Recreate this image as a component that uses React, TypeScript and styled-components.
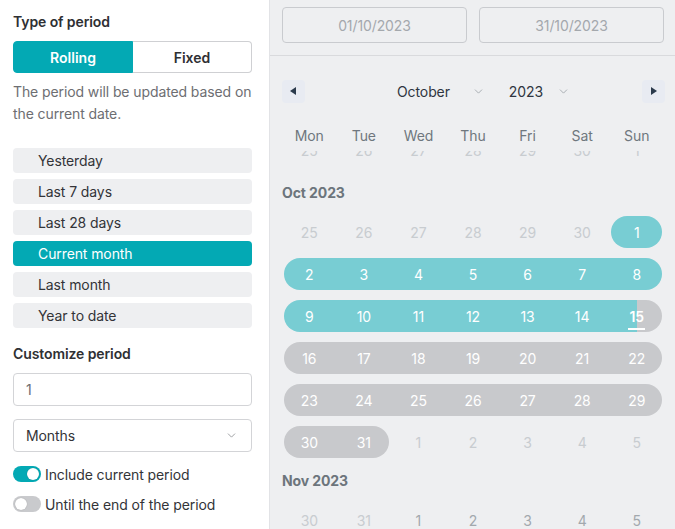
import React from "react"
import styled, { createGlobalStyle } from "styled-components"
import { ChevronDown } from "lucide-react"

const TEAL = "#03a9b4"
const TEAL_LIGHT = "#78cdd3"
const GRAY_PILL = "#c8c9cc"

const GlobalStyle = createGlobalStyle`
  html, body { margin: 0; padding: 0; }
  body { font-family: Inter, "Noto Sans", sans-serif; background: #fff; color: #333; letter-spacing: -0.1px; }
  * { box-sizing: border-box; }
`

const Layout = styled.div`
  display: flex;
  width: 675px;
  height: 529px;
  overflow: hidden;
`

/* ---------- left side ---------- */

const Sidebar = styled.aside`
  width: 270px;
  flex-shrink: 0;
  border-right: 1px solid #e2e3e6;
  padding: 12px 17px 0 13px;
  display: flex;
  flex-direction: column;
  & > * { flex-shrink: 0; }
`

const Heading = styled.div<{ $top?: number }>`
  font-size: 14px;
  line-height: 20px;
  font-weight: 600;
  color: #2f3033;
  margin-top: ${(p) => p.$top || 0}px;
`

const Segment = styled.div`
  display: flex;
  height: 32px;
  margin-top: 9px;
`

const SegmentButton = styled.button<{ $active?: boolean }>`
  flex: 1;
  font-family: inherit;
  font-size: 14px;
  font-weight: 600;
  border: 1px solid ${(p) => (p.$active ? TEAL : "#cfd0d3")};
  background: ${(p) => (p.$active ? TEAL : "#fff")};
  color: ${(p) => (p.$active ? "#fff" : "#2f3033")};
  padding: 0;
  &:first-child { border-radius: 4px 0 0 4px; }
  &:last-child { border-radius: 0 4px 4px 0; border-left: none; }
`

const Hint = styled.p`
  margin: 8px 0 0;
  font-size: 14px;
  line-height: 22px;
  color: #6d6e72;
`

const Presets = styled.div`
  display: flex;
  flex-direction: column;
  gap: 6px;
  margin-top: 23px;
`

const Preset = styled.div<{ $active?: boolean }>`
  height: 25px;
  display: flex;
  align-items: center;
  padding-left: 25px;
  border-radius: 4px;
  font-size: 14px;
  background: ${(p) => (p.$active ? TEAL : "#eeeff1")};
  color: ${(p) => (p.$active ? "#fff" : "#333438")};
`

const Field = styled.div<{ $top: number }>`
  height: 33px;
  margin-top: ${(p) => p.$top}px;
  border: 1px solid #d3d4d7;
  border-radius: 4px;
  display: flex;
  align-items: center;
  justify-content: space-between;
  padding: 0 13px 0 12px;
  font-size: 14px;
  color: #333438;
`

const FieldValue = styled.span<{ $muted?: boolean }>`
  color: ${(p) => (p.$muted ? "#6d6e72" : "#333438")};
`

const ToggleRow = styled.label<{ $top: number }>`
  display: flex;
  align-items: center;
  gap: 4px;
  height: 20px;
  margin-top: ${(p) => p.$top}px;
  font-size: 14px;
  color: #333438;
`

const Track = styled.span<{ $on?: boolean }>`
  width: 28px;
  height: 16px;
  border-radius: 8px;
  background: ${(p) => (p.$on ? TEAL : "#c9cacd")};
  display: flex;
  align-items: center;
  justify-content: ${(p) => (p.$on ? "flex-end" : "flex-start")};
  padding: 0 2px;
`

const Knob = styled.span`
  width: 12px;
  height: 12px;
  border-radius: 50%;
  background: #fff;
  box-shadow: 0 0 1px rgba(0, 0, 0, 0.3);
`

/* ---------- right side ---------- */

const CalendarPane = styled.section`
  flex: 1;
  background: #eeeff1;
  display: flex;
  flex-direction: column;
  overflow: hidden;
  & > * { flex-shrink: 0; }
`

const DateBar = styled.div`
  display: flex;
  gap: 12px;
  padding: 7px 11px 12px 12px;
  border-bottom: 1px solid #d9dadd;
`

const DateInput = styled.div`
  flex: 1;
  height: 36px;
  border: 1px solid #c9cbcf;
  border-radius: 4px;
  display: flex;
  align-items: center;
  justify-content: center;
  font-size: 14px;
  color: #a4a8ad;
`

const Nav = styled.div`
  display: flex;
  align-items: center;
  justify-content: space-between;
  height: 24px;
  margin-top: 23px;
  padding: 0 10px 0 12px;
`

const ArrowButton = styled.div`
  width: 23px;
  height: 23px;
  border-radius: 4px;
  background: #e8ebf2;
  display: flex;
  align-items: center;
  justify-content: center;
`

const NavCenter = styled.div`
  display: flex;
  align-items: center;
  gap: 24px;
  margin-left: 20px;
`

const Dropdown = styled.div<{ $gap: number }>`
  display: flex;
  align-items: center;
  gap: ${(p) => p.$gap}px;
  font-size: 14px;
  color: #2f3540;
`

const Weekdays = styled.div`
  display: grid;
  grid-template-columns: repeat(7, 1fr);
  margin-top: 23px;
  padding: 0 11px 0 12px;
  font-size: 14px;
  line-height: 20px;
  color: #6f777e;
  text-align: center;
`

const ClippedWeek = styled.div`
  height: 9px;
  overflow: hidden;
  margin-top: 5px;
`

const MonthLabel = styled.div<{ $top: number }>`
  margin-top: ${(p) => p.$top}px;
  padding-left: 12px;
  font-size: 14px;
  line-height: 20px;
  font-weight: 700;
  color: #6c757c;
`

const Weeks = styled.div<{ $top: number }>`
  display: flex;
  flex-direction: column;
  gap: 10px;
  margin-top: ${(p) => p.$top}px;
`

const Week = styled.div<{ $shift?: number }>`
  display: grid;
  grid-template-columns: repeat(7, 1fr);
  grid-template-rows: 32px;
  padding: 0 11px 0 12px;
  margin-top: ${(p) => p.$shift || 0}px;
`

const Pill = styled.div<{ $from: number; $to: number; $bg: string }>`
  grid-row: 1;
  grid-column: ${(p) => p.$from} / ${(p) => p.$to + 1};
  margin: 0 2px;
  border-radius: 16px;
  background: ${(p) => p.$bg};
`

const Day = styled.div<{ $col: number; $tone: "on" | "faint" | "dim" }>`
  grid-row: 1;
  grid-column: ${(p) => p.$col};
  display: flex;
  align-items: center;
  justify-content: center;
  font-size: 14px;
  z-index: 1;
  color: ${(p) => (p.$tone === "on" ? "#fff" : p.$tone === "faint" ? "#c8ccd0" : "#a2a8ad")};
`

const Today = styled.span`
  position: relative;
  font-weight: 600;
  &::after {
    content: "";
    position: absolute;
    left: -1px;
    right: -1px;
    bottom: -5px;
    height: 2px;
    background: #fff;
  }
`

type Tone = "on" | "faint" | "dim"

const Triangle = ({ dir }: { dir: "left" | "right" }) => (
  <svg width="7" height="8" viewBox="0 0 7 8">
    <polygon points={dir === "left" ? "6,0 6,8 0,4" : "1,0 1,8 7,4"} fill="#2b3a4c" />
  </svg>
)

const WeekRow = ({
  days,
  tones,
  pills = [],
  today,
  shift,
}: {
  days: (number | string)[]
  tones: Tone[]
  pills?: { from: number; to: number; bg: string }[]
  today?: number
  shift?: number
}) => (
  <Week $shift={shift}>
    {pills.map((p, i) => (
      <Pill key={i} $from={p.from} $to={p.to} $bg={p.bg} />
    ))}
    {days.map((d, i) => (
      <Day key={i} $col={i + 1} $tone={tones[i]}>
        {d === today ? <Today>{d}</Today> : d}
      </Day>
    ))}
  </Week>
)

const presets = ["Yesterday", "Last 7 days", "Last 28 days", "Current month", "Last month", "Year to date"]
const weekdayNames = ["Mon", "Tue", "Wed", "Thu", "Fri", "Sat", "Sun"]
const on7: Tone[] = ["on", "on", "on", "on", "on", "on", "on"]
const faint7: Tone[] = ["faint", "faint", "faint", "faint", "faint", "faint", "faint"]

export default function App() {
  return (
    <>
      <GlobalStyle />
      <Layout>
        <Sidebar>
          <Heading>Type of period</Heading>
          <Segment>
            <SegmentButton $active>Rolling</SegmentButton>
            <SegmentButton>Fixed</SegmentButton>
          </Segment>
          <Hint>The period will be updated based on the current date.</Hint>
          <Presets>
            {presets.map((p) => (
              <Preset key={p} $active={p === "Current month"}>
                {p}
              </Preset>
            ))}
          </Presets>
          <Heading $top={16}>Customize period</Heading>
          <Field $top={9}>
            <FieldValue $muted>1</FieldValue>
          </Field>
          <Field $top={13}>
            <FieldValue>Months</FieldValue>
            <ChevronDown size={13} color="#8a8c90" strokeWidth={1.5} />
          </Field>
          <ToggleRow $top={12}>
            <Track $on>
              <Knob />
            </Track>
            Include current period
          </ToggleRow>
          <ToggleRow $top={10}>
            <Track>
              <Knob />
            </Track>
            Until the end of the period
          </ToggleRow>
        </Sidebar>

        <CalendarPane>
          <DateBar>
            <DateInput>01/10/2023</DateInput>
            <DateInput>31/10/2023</DateInput>
          </DateBar>
          <Nav>
            <ArrowButton>
              <Triangle dir="left" />
            </ArrowButton>
            <NavCenter>
              <Dropdown $gap={22}>
                October
                <ChevronDown size={13} color="#9aa0a6" strokeWidth={1.5} />
              </Dropdown>
              <Dropdown $gap={14}>
                2023
                <ChevronDown size={13} color="#9aa0a6" strokeWidth={1.5} />
              </Dropdown>
            </NavCenter>
            <ArrowButton>
              <Triangle dir="right" />
            </ArrowButton>
          </Nav>
          <Weekdays>
            {weekdayNames.map((w) => (
              <span key={w}>{w}</span>
            ))}
          </Weekdays>
          <ClippedWeek>
            <WeekRow days={[25, 26, 27, 28, 29, 30, 1]} tones={faint7} shift={-17} />
          </ClippedWeek>

          <MonthLabel $top={23}>Oct 2023</MonthLabel>
          <Weeks $top={13}>
            <WeekRow
              days={[25, 26, 27, 28, 29, 30, 1]}
              tones={["faint", "faint", "faint", "faint", "faint", "faint", "on"]}
              pills={[{ from: 7, to: 7, bg: TEAL_LIGHT }]}
            />
            <WeekRow days={[2, 3, 4, 5, 6, 7, 8]} tones={on7} pills={[{ from: 1, to: 7, bg: TEAL_LIGHT }]} />
            <WeekRow
              days={[9, 10, 11, 12, 13, 14, 15]}
              tones={on7}
              today={15}
              pills={[
                {
                  from: 1,
                  to: 7,
                  bg: `linear-gradient(to right, ${TEAL_LIGHT} 0, ${TEAL_LIGHT} calc(100% - 25px), ${GRAY_PILL} calc(100% - 25px))`,
                },
              ]}
            />
            <WeekRow days={[16, 17, 18, 19, 20, 21, 22]} tones={on7} pills={[{ from: 1, to: 7, bg: GRAY_PILL }]} />
            <WeekRow days={[23, 24, 25, 26, 27, 28, 29]} tones={on7} pills={[{ from: 1, to: 7, bg: GRAY_PILL }]} />
            <WeekRow
              days={[30, 31, 1, 2, 3, 4, 5]}
              tones={["on", "on", "faint", "faint", "faint", "faint", "faint"]}
              pills={[{ from: 1, to: 2, bg: GRAY_PILL }]}
            />
          </Weeks>

          <MonthLabel $top={13}>Nov 2023</MonthLabel>
          <Weeks $top={13}>
            <WeekRow
              days={[30, 31, 1, 2, 3, 4, 5]}
              tones={["faint", "faint", "dim", "dim", "dim", "dim", "dim"]}
            />
          </Weeks>
        </CalendarPane>
      </Layout>
    </>
  )
}
